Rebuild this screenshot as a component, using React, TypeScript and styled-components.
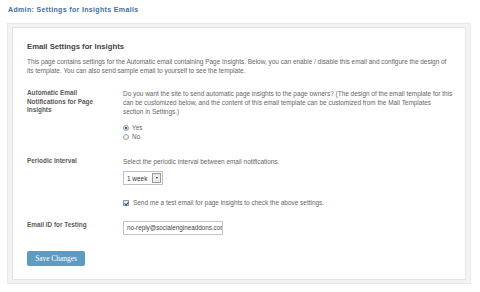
import React from "react";
import styled, { createGlobalStyle } from "styled-components";

const Global = createGlobalStyle`
  html, body { margin: 0; padding: 0; background: #ffffff; }
  body { font-family: "Liberation Sans", Arial, sans-serif; }
  * { box-sizing: border-box; }
`;

const Page = styled.div`
  width: 480px;
  height: 292px;
  padding: 5px 8px 0 7px;
  background: #ffffff;
`;

const PageTitle = styled.h2`
  margin: 0 0 0 1px;
  font-size: 7px;
  line-height: 9px;
  font-weight: bold;
  letter-spacing: 0.35px;
  color: #3f6ea5;
`;

const Outer = styled.div`
  margin-top: 9px;
  width: 464px;
  background: #f3f3f3;
  border: 1px solid #e9e9e9;
  padding: 3px 4px 3px 4px;
`;

const Inner = styled.form`
  background: #ffffff;
  border: 1px solid #e4e4e4;
  padding: 13px 10px 13px 14px;
  display: flex;
  flex-direction: column;
`;

const Heading = styled.h3`
  margin: 0;
  font-size: 7.7px;
  line-height: 11px;
  font-weight: bold;
  color: #444;
`;

const Desc = styled.p`
  margin: 5px 0 0;
  font-size: 6.45px;
  line-height: 9px;
  color: #666;
  white-space: nowrap;
`;

const Row = styled.div<{ $top: number }>`
  display: grid;
  grid-template-columns: 96px 1fr;
  margin-top: ${(p) => p.$top}px;
`;

const Label = styled.div`
  font-size: 6.4px;
  line-height: 8.5px;
  font-weight: bold;
  color: #5a5a5a;
  width: 72px;
`;

const Field = styled.div`
  display: flex;
  flex-direction: column;
  align-items: flex-start;
`;

const Help = styled.div`
  font-size: 6.45px;
  line-height: 9px;
  color: #666;
  white-space: nowrap;
`;

const RadioList = styled.div`
  margin-top: 7px;
  display: flex;
  flex-direction: column;
`;

const Option = styled.label`
  display: flex;
  align-items: center;
  gap: 3px;
  height: 9px;
  font-size: 6.45px;
  color: #666;
`;

const RadioDot = styled.span<{ $on?: boolean }>`
  width: 6px;
  height: 6px;
  border-radius: 50%;
  border: 1px solid #9aa4ad;
  background: ${(p) => (p.$on ? "radial-gradient(circle, #3d6a92 0 1.4px, #dfe6ee 1.6px)" : "#f4f4f4")};
`;

const Select = styled.div`
  margin-top: 5px;
  height: 14px;
  width: 40px;
  border: 1px solid #c0c0c0;
  display: flex;
  align-items: center;
  justify-content: space-between;
  padding: 0 1px 0 3px;
  font-size: 6.45px;
  color: #333;
  background: #fff;
  white-space: nowrap;
`;

const SelectArrow = styled.span`
  width: 9px;
  height: 10px;
  flex: none;
  border: 1px solid #9a9a9a;
  background: #ececec;
  display: flex;
  align-items: center;
  justify-content: center;
  &::after {
    content: "";
    border-left: 1.5px solid transparent;
    border-right: 1.5px solid transparent;
    border-top: 2px solid #333;
  }
`;

const CheckRow = styled.label`
  margin-top: 14px;
  display: flex;
  align-items: center;
  gap: 4px;
  font-size: 6.45px;
  color: #666;
`;

const CheckBox = styled.span`
  width: 6px;
  height: 6px;
  border: 1px solid #8f9aa6;
  background: #e6ebf1;
  position: relative;
  &::after {
    content: "";
    position: absolute;
    left: 1px;
    top: 0px;
    width: 1.5px;
    height: 3px;
    border-right: 1px solid #2e4c6c;
    border-bottom: 1px solid #2e4c6c;
    transform: rotate(40deg);
  }
`;

const TextInput = styled.div`
  width: 100px;
  height: 14px;
  border: 1px solid #c4c4c4;
  padding: 0 3px;
  font-size: 6.3px;
  line-height: 12px;
  color: #444;
  white-space: nowrap;
  overflow: hidden;
  background: #fff;
`;

const SaveButton = styled.button`
  margin-top: 16px;
  align-self: flex-start;
  width: 58px;
  height: 15px;
  border: none;
  border-radius: 2px;
  background: #5e9bc3;
  color: #ffffff;
  font-family: "Liberation Serif", "Times New Roman", serif;
  font-weight: normal;
  font-size: 7.4px;
  padding: 0;
`;

export default function App() {
  return (
    <>
      <Global />
      <Page>
        <PageTitle>Admin: Settings for Insights Emails</PageTitle>
        <Outer>
          <Inner onSubmit={(e) => e.preventDefault()}>
            <Heading>Email Settings for Insights</Heading>
            <Desc>
              This page contains settings for the Automatic email containing Page Insights. Below, you can enable / disable this email and configure the design of
              <br />
              its template. You can also send sample email to yourself to see the template.
            </Desc>

            <Row $top={14}>
              <Label>Automatic Email Notifications for Page Insights</Label>
              <Field>
                <Help>
                  Do you want the site to send automatic page insights to the page owners? (The design of the email template for this
                  <br />
                  can be customized below, and the content of this email template can be customized from the Mail Templates
                  <br />
                  section in Settings.)
                </Help>
                <RadioList>
                  <Option>
                    <RadioDot $on />
                    Yes
                  </Option>
                  <Option>
                    <RadioDot />
                    No
                  </Option>
                </RadioList>
              </Field>
            </Row>

            <Row $top={16}>
              <Label>Periodic Interval</Label>
              <Field>
                <Help>Select the periodic interval between email notifications.</Help>
                <Select>
                  1 week
                  <SelectArrow />
                </Select>
                <CheckRow>
                  <CheckBox />
                  Send me a test email for page insights to check the above settings.
                </CheckRow>
              </Field>
            </Row>

            <Row $top={15}>
              <Label>Email ID for Testing</Label>
              <Field>
                <TextInput>no-reply@socialengineaddons.com</TextInput>
              </Field>
            </Row>

            <SaveButton type="submit">Save Changes</SaveButton>
          </Inner>
        </Outer>
      </Page>
    </>
  );
}
